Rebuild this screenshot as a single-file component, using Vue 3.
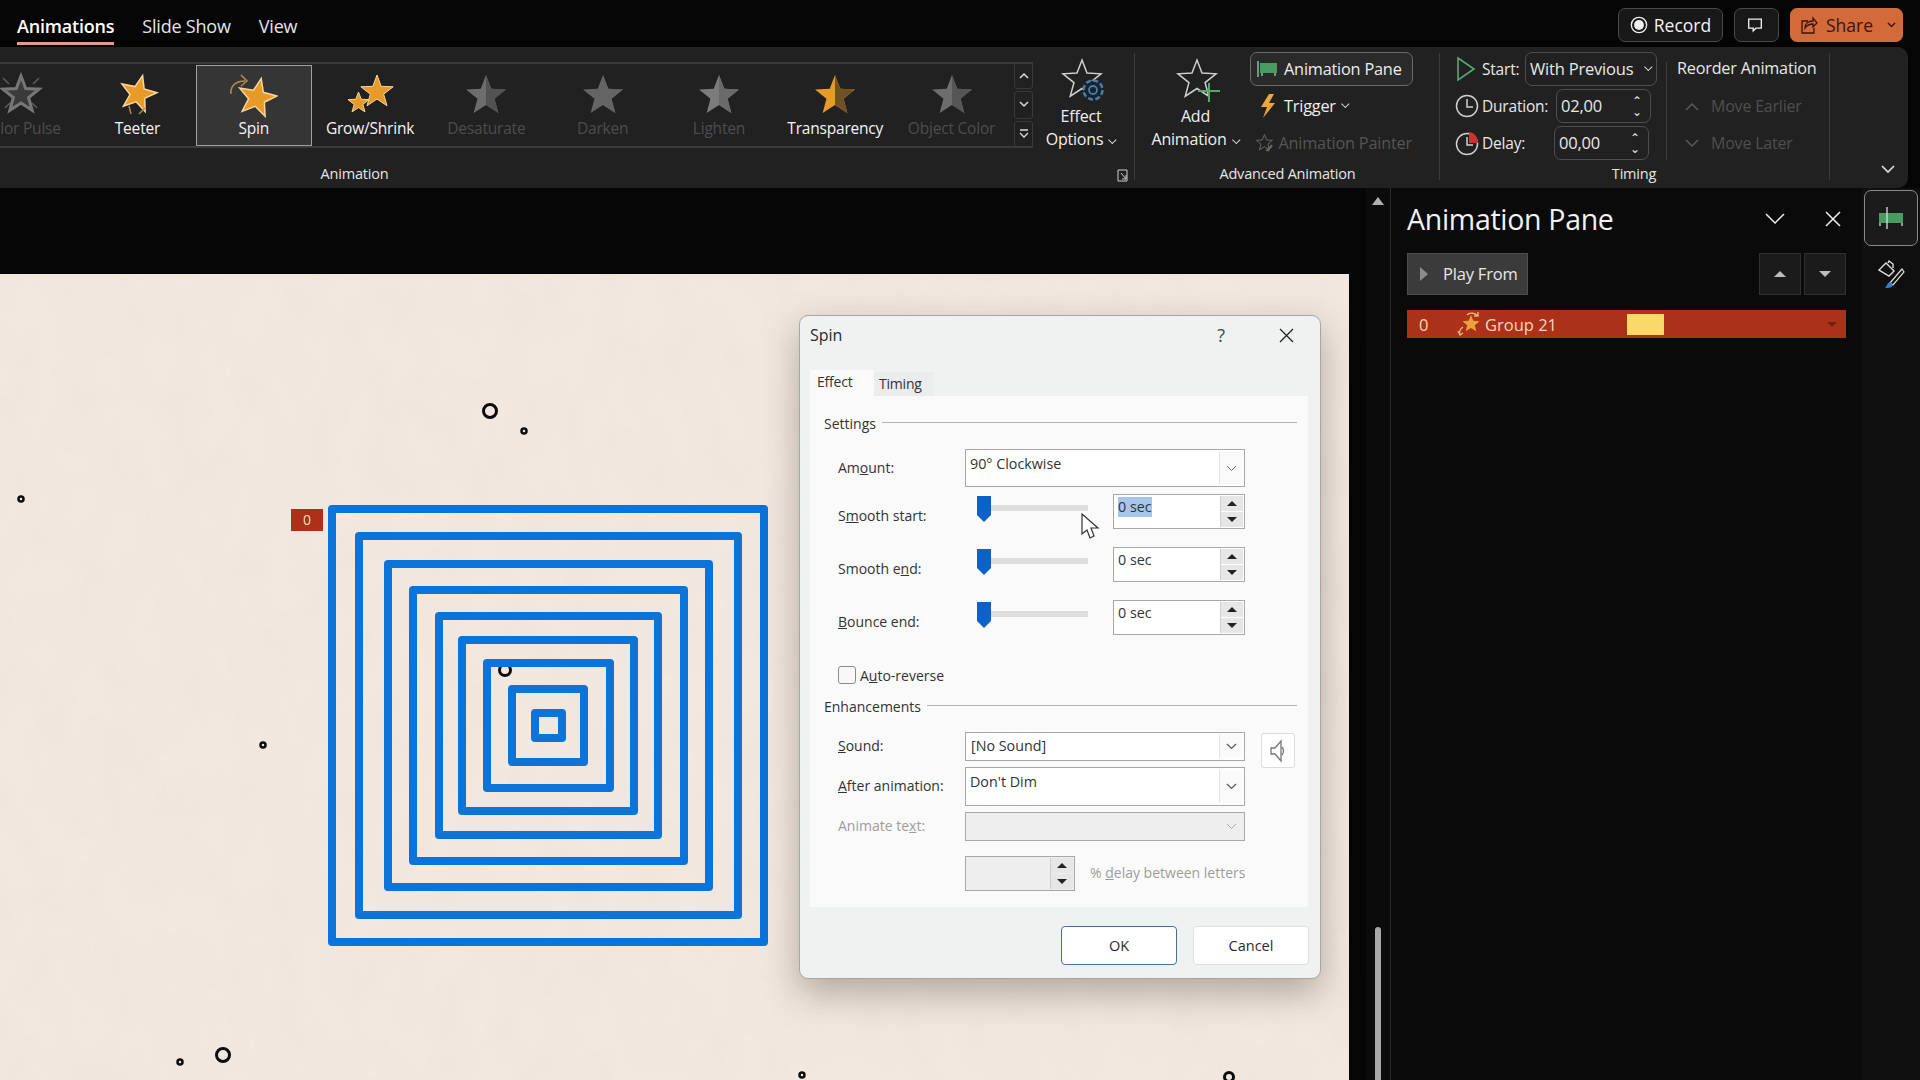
<template>
  <div class="app">
    <header class="topbar">
      <nav class="tabs">
        <span class="tab active">Animations</span>
        <span class="tab">Slide Show</span>
        <span class="tab">View</span>
      </nav>
      <div class="top-actions">
        <button class="top-btn record">
          <svg width="18" height="18" viewBox="0 0 20 20"><circle cx="10" cy="10" r="8.500" fill="none" stroke="#eee" stroke-width="1.500"/><circle cx="10" cy="10" r="5.500" fill="#eee"/></svg>
          Record
        </button>
        <button class="top-btn comment">
          <svg width="18" height="20" viewBox="0 0 20 20"><path d="M3 3.500h14v10h-6l-3 3v-3H3z" fill="none" stroke="#eee" stroke-width="1.500"/></svg>
        </button>
        <button class="top-btn share">
          <svg width="17" height="20" viewBox="0 0 17 20"><path d="M7 6H1v12h12v-5M4 13c0-4 3-7 8-7V3l4 5-4 4V9c-4 0-6 1-8 4z" fill="none" stroke="#3d1408" stroke-width="1.300"/></svg>
          Share
          <svg class="share-caret" width="9" height="6" viewBox="0 0 9 6"><path d="M1 1l3.500 3.500L8 1" fill="none" stroke="#3d1408" stroke-width="1.500"/></svg>
        </button>
      </div>
    </header>

    <section class="ribbon">
      <div class="group group-animation">
        <div class="gallery-row">
          <div class="gallery">
            <div class="gallery-items">
              <div
                  v-for="item in effects"
                  :key="item.name"
                  class="effect"
                  :class="{ selected: item.name === 'Spin', disabled: item.disabled }"
              >
                <svg width="48" height="48" viewBox="0 0 48 48">
                  <template v-if="item.icon === 'pulse'">
                    <path d="M6 6l6 6M42 6l-6 6M8 36l5-5M40 36l-5-5" stroke="#5c5c5c" stroke-width="1.500"/>
                    <polygon :points="star(24, 23, 19, 8)" fill="#3a3a3a" stroke="#777" stroke-width="3"/>
                  </template>
                  <template v-else-if="item.icon === 'teeter'">
                    <polygon :points="star(25, 22, 19, 8, 14)" fill="#e89a28" stroke="#f5d79c" stroke-width="1.500"/>
                    <path d="M16 34l2 8M32 36l-6 6" stroke="#a98552" stroke-width="1.500"/>
                  </template>
                  <template v-else-if="item.icon === 'spin'">
                    <polygon :points="star(27, 26, 20, 8.500, 12)" fill="#e89a28" stroke="#f5d79c" stroke-width="1.500"/>
                    <path d="M1 22c-1-9 6-13 14-13M11 3l6 6-6 5" fill="none" stroke="#b08a52" stroke-width="1.500"/>
                  </template>
                  <template v-else-if="item.icon === 'grow'">
                    <polygon :points="star(31, 20, 17, 7)" fill="#e89a28" stroke="#f5d79c" stroke-width="1"/>
                    <polygon :points="star(12.500, 31, 11, 4.600)" fill="#e89a28" stroke="#f5d79c" stroke-width="1"/>
                  </template>
                  <template v-else-if="item.icon === 'transparency'">
                    <polygon :points="star(24, 24, 21, 9)" fill="#e89a28"/>
                    <polygon :points="halfStar(24, 24, 21, 9)" fill="#6e5128"/>
                  </template>
                  <template v-else>
                    <polygon :points="star(24, 24, 21, 9)" :fill="item.tone"/>
                    <polygon :points="halfStar(24, 24, 21, 9)" :fill="item.shade"/>
                  </template>
                </svg>
                <span class="effect-name">{{ item.name }}</span>
              </div>
            </div>
            <div class="gallery-scroll">
              <button class="scroll-btn"><svg width="10" height="7" viewBox="0 0 10 7"><path d="M1 6l4-4 4 4" fill="none" stroke="#ddd" stroke-width="1.500"/></svg></button>
              <button class="scroll-btn"><svg width="10" height="7" viewBox="0 0 10 7"><path d="M1 1l4 4 4-4" fill="none" stroke="#ddd" stroke-width="1.500"/></svg></button>
              <button class="scroll-btn"><svg width="10" height="10" viewBox="0 0 10 10"><path d="M1 1h8M1 4l4 4 4-4" fill="none" stroke="#ddd" stroke-width="1.300"/></svg></button>
            </div>
          </div>
          <button class="big-btn effect-options">
            <svg class="big-icon" width="48" height="47" viewBox="0 0 48 47">
              <polygon :points="star(25, 22, 20, 8.500)" fill="none" stroke="#cfcfcf" stroke-width="1.500"/>
              <circle cx="36" cy="32" r="9.500" fill="#212121" stroke="#3f7fb8" stroke-width="2.500" stroke-dasharray="5 2.450"/>
              <circle cx="36" cy="32" r="4" fill="none" stroke="#3f7fb8" stroke-width="1.800"/>
            </svg>
            <span class="big-label">Effect</span>
            <span class="big-label">Options <i class="caret"></i></span>
          </button>
        </div>
        <div class="group-label animation-label">Animation</div>
        <svg class="launcher" width="11" height="13" viewBox="0 0 11 13"><path d="M1 1h9v11H1zM4 4l5 6M9 6v4H5" fill="none" stroke="#cfcfcf" stroke-width="1"/></svg>
      </div>

      <div class="group group-advanced">
        <div class="advanced-body">
          <button class="big-btn add-animation">
            <svg class="big-icon" width="48" height="47" viewBox="0 0 48 47">
              <polygon :points="star(25, 22, 20, 8.500)" fill="none" stroke="#cfcfcf" stroke-width="1.500"/>
              <path d="M37 25v19M26 33h22" stroke="#57a86a" stroke-width="2"/>
            </svg>
            <span class="big-label">Add</span>
            <span class="big-label">Animation <i class="caret"></i></span>
          </button>
          <div class="small-col">
            <button class="small-btn pane-btn">
              <svg width="24" height="20" viewBox="0 0 24 20"><rect x="4" y="4" width="17" height="10" fill="#4a9a62"/><path d="M2 2v16M6 14v3M19 14v3" stroke="#9ed3aa" stroke-width="1.300"/></svg>
              Animation Pane
            </button>
            <button class="small-btn">
              <svg width="24" height="26" viewBox="0 0 24 26"><path d="M13 1L5 14h6l-4 11 12-15h-6l5-9z" fill="#e8a93a"/></svg>
              Trigger <i class="caret"></i>
            </button>
            <button class="small-btn off">
              <svg width="24" height="24" viewBox="0 0 24 24"><polygon :points="star(11, 12, 11, 4.800)" fill="none" stroke="#666" stroke-width="1.300"/><path d="M12 22l8-8 2 2-6 7z" fill="#666"/></svg>
              Animation Painter
            </button>
          </div>
        </div>
        <div class="group-label">Advanced Animation</div>
      </div>

      <div class="group group-timing">
        <div class="timing-body">
          <div class="timing-col">
            <div class="timing-row">
              <svg class="timing-icon" width="24" height="32" viewBox="0 0 24 32"><path d="M3 5l16 11L3 27z" fill="none" stroke="#5aa872" stroke-width="1.600"/></svg>
              <span class="timing-label start-label">Start:</span>
              <div class="field start-field">With Previous <i class="caret"></i></div>
            </div>
            <div class="timing-row">
              <svg class="timing-icon" width="24" height="26" viewBox="0 0 24 26"><circle cx="12" cy="13" r="10.500" fill="none" stroke="#cfcfcf" stroke-width="1.500"/><path d="M12 6v8h6" fill="none" stroke="#cfcfcf" stroke-width="1.500"/></svg>
              <span class="timing-label duration-label">Duration:</span>
              <div class="field number-field">02,00<span class="steps"><i>⌃</i><i>⌄</i></span></div>
            </div>
            <div class="timing-row">
              <svg class="timing-icon" width="24" height="26" viewBox="0 0 24 26"><circle cx="12" cy="14" r="10.500" fill="none" stroke="#cfcfcf" stroke-width="1.500"/><path d="M12 7v8h6" fill="none" stroke="#cfcfcf" stroke-width="1.500"/><path d="M13 2a10 10 0 0 1 10 11h-9V3z" fill="#cf2f2f"/></svg>
              <span class="timing-label delay-label">Delay:</span>
              <div class="field number-field">00,00<span class="steps"><i>⌃</i><i>⌄</i></span></div>
            </div>
          </div>
          <div class="reorder-col">
            <div class="reorder-title">Reorder Animation</div>
            <div class="reorder-item">
              <svg width="14" height="9" viewBox="0 0 14 9"><path d="M1 8l6-6 6 6" fill="none" stroke="#5a5a5a" stroke-width="1.500"/></svg>
              Move Earlier
            </div>
            <div class="reorder-item">
              <svg width="14" height="9" viewBox="0 0 14 9"><path d="M1 1l6 6 6-6" fill="none" stroke="#5a5a5a" stroke-width="1.500"/></svg>
              Move Later
            </div>
          </div>
        </div>
        <div class="group-label timing-label-bottom">Timing</div>
      </div>

      <div class="group group-collapse">
        <svg width="14" height="9" viewBox="0 0 14 9"><path d="M1 1l6 6 6-6" fill="none" stroke="#ddd" stroke-width="1.700"/></svg>
      </div>
    </section>

    <main class="workspace">
      <div class="slide-area">
        <div class="slide">
          <svg class="slide-art" width="1349" height="806" viewBox="0 274 1349 806">
            <defs>
              <filter id="paper" x="0" y="0" width="100%" height="100%">
                <feTurbulence type="fractalNoise" baseFrequency="0.03 0.018" numOctaves="3" seed="7"/>
                <feColorMatrix values="0 0 0 0 0.6  0 0 0 0 0.5  0 0 0 0 0.42  0.1 0 0 0 -0.03"/>
              </filter>
            </defs>
            <rect x="0" y="274" width="1349" height="806" fill="#f2e8df"/>
            <rect x="0" y="274" width="1349" height="806" filter="url(#paper)"/>
            <circle
                v-for="dot in dots"
                :key="dot.x + '-' + dot.y"
                :cx="dot.x"
                :cy="dot.y"
                :r="dot.r"
                fill="none"
                stroke="#0c0c0c"
                :stroke-width="dot.w"
            />
            <rect
                v-for="sq in squares"
                :key="sq[0]"
                :x="sq[0] + 4"
                :y="sq[1] + 4"
                :width="sq[2] - sq[0] - 8"
                :height="sq[3] - sq[1] - 8"
                fill="none"
                stroke="#0a74da"
                stroke-width="8"
                stroke-linejoin="round"
            />
          </svg>
          <span class="anim-tag">0</span>

          <div class="dialog">
            <div class="dialog-title">
              <span>Spin</span>
              <span class="help">?</span>
              <svg class="close" width="15" height="15" viewBox="0 0 15 15"><path d="M1 1l13 13M14 1L1 14" stroke="#222" stroke-width="1.300"/></svg>
            </div>
            <div class="dialog-tabs">
              <span class="dtab on">Effect</span>
              <span class="dtab">Timing</span>
            </div>
            <div class="panel">
              <div class="section-head"><span>Settings</span><i></i></div>
              <div class="form-row amount-row">
                <label><span>Am<u>o</u>unt:</span></label>
                <div class="combo tall">90° Clockwise<span class="combo-btn"><svg width="11" height="7" viewBox="0 0 11 7"><path d="M1 1l4.500 4.500L10 1" fill="none" stroke="#666" stroke-width="1"/></svg></span></div>
              </div>
              <div v-for="row in sliders" :key="row.key" class="form-row slider-row" :class="row.key">
                <label class="low"><span v-html="row.label"></span></label>
                <div class="slider-cell">
                  <div class="slider">
                    <svg width="14" height="27" viewBox="0 0 14 27"><path d="M0 1h14v19l-7 7-7-7z" fill="#0b62c8"/></svg>
                    <i class="track"></i>
                  </div>
                  <div class="spin-input">
                    <span :class="{ picked: row.key === 'start' }">0 sec</span>
                    <span class="spin-btns">
                      <b><i class="tri up"></i></b>
                      <b><i class="tri down"></i></b>
                    </span>
                  </div>
                </div>
              </div>
              <div class="auto-row">
                <i class="check"></i>
                <span>A<u>u</u>to-reverse</span>
              </div>
              <div class="section-head enh-head"><span>Enhancements</span><i></i></div>
              <div class="enh-grid">
                <label class="sound-label"><span><u>S</u>ound:</span></label>
                <div class="combo mid">[No Sound]<span class="combo-btn"><svg width="11" height="7" viewBox="0 0 11 7"><path d="M1 1l4.500 4.500L10 1" fill="none" stroke="#555" stroke-width="1.200"/></svg></span></div>
                <button class="speaker">
                  <svg width="16" height="24" viewBox="0 0 16 24"><path d="M1 9h4l6-7v20l-6-7H1zM12 8c2 2 2 6 0 8" fill="none" stroke="#777" stroke-width="1.300"/></svg>
                </button>
                <label class="lift"><span><u>A</u>fter animation:</span></label>
                <div class="combo tall after">Don't Dim<span class="combo-btn"><svg width="11" height="7" viewBox="0 0 11 7"><path d="M1 1l4.500 4.500L10 1" fill="none" stroke="#555" stroke-width="1.200"/></svg></span></div>
                <label class="muted lift"><span>Animate te<u>x</u>t:</span></label>
                <div class="combo mid off"><span class="combo-btn"><svg width="11" height="7" viewBox="0 0 11 7"><path d="M1 1l4.500 4.500L10 1" fill="none" stroke="#aaa" stroke-width="1"/></svg></span></div>
              </div>
              <div class="delay-row">
                <div class="spin-input off">
                  <span></span>
                  <span class="spin-btns">
                    <b><i class="tri up"></i></b>
                    <b><i class="tri down"></i></b>
                  </span>
                </div>
                <span class="muted delay-text">% <u>d</u>elay between letters</span>
              </div>
            </div>
            <div class="dialog-foot">
              <button class="dlg-btn default">OK</button>
              <button class="dlg-btn">Cancel</button>
            </div>
            <svg class="cursor" width="20" height="27" viewBox="0 0 20 27"><path d="M1 1v20l5-4 3 8 4-2-3-8h7z" fill="#fff" stroke="#333" stroke-width="1.200"/></svg>
          </div>
        </div>
      </div>

      <div class="v-scroll">
        <i class="v-arrow"></i>
        <i class="v-thumb"></i>
      </div>

      <aside class="pane">
        <div class="pane-head">
          <h2>Animation Pane</h2>
          <svg width="20" height="12" viewBox="0 0 20 12"><path d="M1 1l9 9 9-9" fill="none" stroke="#eee" stroke-width="1.500"/></svg>
          <svg class="pane-close" width="16" height="16" viewBox="0 0 16 16"><path d="M1 1l14 14M15 1L1 15" stroke="#eee" stroke-width="1.500"/></svg>
        </div>
        <div class="pane-tools">
          <button class="play-from"><i class="play-tri"></i>Play From</button>
          <span class="tools-gap"></span>
          <button class="move-btn"><i class="tri up light"></i></button>
          <button class="move-btn"><i class="tri down light"></i></button>
        </div>
        <div class="anim-row">
          <span class="anim-num">0</span>
          <svg width="26" height="26" viewBox="0 0 26 26">
            <polygon :points="star(14, 13, 9, 4)" fill="#e8a23a"/>
            <path d="M10 4c3-3 8-2 11 1M21 1v4h-4M3 24c-1-3 0-6 3-8M1 20l2 4 3-2" fill="none" stroke="#f0b87a" stroke-width="1.300"/>
          </svg>
          <span class="anim-name">Group 21</span>
          <i class="swatch"></i>
          <i class="tri down row-caret"></i>
        </div>
      </aside>

      <div class="rail">
        <button class="rail-btn on">
          <svg width="26" height="22" viewBox="0 0 26 22"><rect x="1" y="6" width="24" height="10" fill="#4a9a62"/><path d="M9 0v22M2 16v3M24 16v3" stroke="#cfe6d4" stroke-width="1.300"/></svg>
        </button>
        <button class="rail-btn">
          <svg width="28" height="30" viewBox="0 0 28 30"><path d="M2 10l7-7 8 8-5 5zM11 3l1-2 4 3v4" fill="none" stroke="#ddd" stroke-width="1.400"/><path d="M25 9L13 23l3 2 11-13z" fill="none" stroke="#ddd" stroke-width="1.200"/><path d="M13 22c-3 1-3 4-5 6 3 0 7 0 8-3z" fill="#2f7fcf"/></svg>
        </button>
      </div>
    </main>
  </div>
</template>

<script setup>
// 五角星顶点
const starVertices = (cx, cy, outer, inner = outer * 0.42, rot = 0) => {
  const pts = []
  for (let i = 0; i < 10; i++) {
    const r = i % 2 === 0 ? outer : inner
    const a = ((i * 36 + rot - 90) * Math.PI) / 180
    pts.push(`${(cx + r * Math.cos(a)).toFixed(2)},${(cy + r * Math.sin(a)).toFixed(2)}`)
  }
  return pts
}

const star = (cx, cy, outer, inner, rot) => starVertices(cx, cy, outer, inner, rot).join(' ')
const halfStar = (cx, cy, outer, inner) => starVertices(cx, cy, outer, inner).slice(0, 6).join(' ')

const effects = [
  { name: 'Color Pulse', icon: 'pulse', disabled: true },
  { name: 'Teeter', icon: 'teeter' },
  { name: 'Spin', icon: 'spin' },
  { name: 'Grow/Shrink', icon: 'grow' },
  { name: 'Desaturate', icon: 'plain', tone: '#6d6d6d', shade: '#525252', disabled: true },
  { name: 'Darken', icon: 'plain', tone: '#646464', shade: '#646464', disabled: true },
  { name: 'Lighten', icon: 'plain', tone: '#7c7c7c', shade: '#6a6a6a', disabled: true },
  { name: 'Transparency', icon: 'transparency' },
  { name: 'Object Color', icon: 'plain', tone: '#6d6d6d', shade: '#565656', disabled: true }
]

const sliders = [
  { key: 'start', label: 'S<u>m</u>ooth start:' },
  { key: 'end', label: 'Smooth e<u>n</u>d:' },
  { key: 'bounce', label: '<u>B</u>ounce end:' }
]

const squares = [
  [328, 505, 768, 946],
  [355, 532, 742, 919],
  [384, 560, 713, 891],
  [409, 586, 688, 865],
  [435, 612, 662, 839],
  [458, 636, 638, 815],
  [483, 659, 614, 792],
  [508, 685, 588, 766],
  [531, 709, 566, 742]
]

const dots = [
  { x: 490, y: 411, r: 6.5, w: 3 },
  { x: 524, y: 431, r: 2.5, w: 2.5 },
  { x: 21, y: 499, r: 2.5, w: 2.5 },
  { x: 263, y: 745, r: 2.5, w: 2.5 },
  { x: 180, y: 1062, r: 2.5, w: 2.5 },
  { x: 223, y: 1055, r: 6.5, w: 3 },
  { x: 802, y: 1075, r: 2.5, w: 2.5 },
  { x: 1229, y: 1077, r: 4.5, w: 3 },
  { x: 505, y: 670, r: 5.5, w: 3 }
]
</script>

<style scoped>
.app {
  width: 1920px;
  height: 1080px;
  display: flex;
  flex-direction: column;
  overflow: hidden;
  background: #050505;
  color: #e8e8e8;
  font-family: "Open Sans", "Noto Sans", sans-serif;
  font-size: 15px;
}

button {
  font-family: inherit;
  color: inherit;
  background: none;
  border: none;
  padding: 0;
}

i {
  font-style: normal;
  display: block;
}

/* top bar */
.topbar {
  height: 47px;
  flex-shrink: 0;
  display: flex;
  align-items: center;
  justify-content: space-between;
}

.tabs {
  display: flex;
  gap: 28px;
  padding-left: 17px;
  padding-top: 2px;
}

.tab {
  position: relative;
  font-size: 18px;
  letter-spacing: -0.2px;
  color: #e4e4e4;
  line-height: 28px;
  margin-top: 7px;
  padding-bottom: 5px;
}

.tab.active {
  color: #fff;
  font-weight: 600;
  border-bottom: 3px solid #d9a18a;
  padding-bottom: 2px;
}

.top-actions {
  display: flex;
  gap: 11px;
  padding-right: 17px;
  padding-top: 3px;
  align-items: center;
}

.top-btn {
  height: 34px;
  display: flex;
  align-items: center;
  justify-content: center;
  gap: 6px;
  font-size: 17.500px;
  border: 1px solid #4a4a4a;
  border-radius: 7px;
  background: #181818;
  color: #f2f2f2;
}

.record { width: 105px; }

.comment {
  width: 45px;
  padding-right: 4px;
  box-sizing: border-box;
}

.share {
  width: 113px;
  justify-content: flex-start;
  padding-left: 10px;
  gap: 8px;
  box-sizing: border-box;
  background: #d26a3a;
  border-color: #d26a3a;
  color: #3d1408;
}

.share-caret {
  margin-left: 6px;
}

/* ribbon */
.ribbon {
  position: relative;
  height: 141px;
  width: 1908px;
  flex-shrink: 0;
  display: flex;
  background: #212121;
  border-radius: 0 10px 10px 0;
}

.group {
  position: relative;
  display: flex;
  flex-direction: column;
}

.group::after {
  content: "";
  position: absolute;
  right: 0;
  top: 6px;
  bottom: 8px;
  width: 1px;
  background: #3b3b3b;
}

.group-label {
  margin-top: auto;
  height: 25px;
  line-height: 22px;
  font-size: 14.500px;
  text-align: center;
  letter-spacing: -0.2px;
  color: #e6e6e6;
}

.group-animation {
  width: 1135px;
}

.gallery-row {
  display: flex;
  align-items: flex-start;
  padding-top: 15px;
}

.gallery {
  display: flex;
  width: 1033px;
  height: 86px;
  border-top: 2px solid #3a3a3a;
  border-bottom: 2px solid #3a3a3a;
  box-sizing: border-box;
}

.gallery-items {
  flex: 1;
  display: flex;
  overflow: hidden;
  min-width: 0;
  padding-top: 1px;
}

.effect {
  flex: 0 0 116.300px;
  height: 81px;
  box-sizing: border-box;
  display: flex;
  flex-direction: column;
  align-items: center;
  padding-top: 6px;
  border: 1px solid transparent;
}

.effect:first-child {
  margin-left: -37px;
}

.effect.selected {
  background: #353535;
  border: 1px solid #a0a0a0;
}

.effect-name {
  font-size: 15.500px;
  letter-spacing: -0.2px;
  line-height: 20px;
  color: #f4f4f4;
  white-space: nowrap;
  margin-top: -2px;
}

.effect.disabled .effect-name {
  color: #4d4d4d;
}

.gallery-scroll {
  width: 19px;
  flex-shrink: 0;
  display: flex;
  flex-direction: column;
  gap: 2px;
  margin-top: -2px;
  margin-bottom: -2px;
}

.scroll-btn {
  flex: 1;
  display: flex;
  align-items: center;
  justify-content: center;
  border: 1px solid #3a3a3a;
  border-radius: 3px;
}

.big-btn {
  display: flex;
  flex-direction: column;
  align-items: center;
}

.big-icon {
  overflow: visible;
}

.big-label {
  font-size: 16px;
  line-height: 23px;
  letter-spacing: -0.2px;
  white-space: nowrap;
  color: #efefef;
}

.effect-options {
  width: 96px;
  margin-top: -4px;
}

.caret {
  display: inline-block;
  width: 5px;
  height: 5px;
  border-right: 1.500px solid #ddd;
  border-bottom: 1.500px solid #ddd;
  transform: rotate(45deg) translate(-2px, -1px);
  margin-left: 3px;
}

.animation-label {
  padding-right: 426px;
}

.launcher {
  position: absolute;
  left: 1117px;
  top: 122px;
}

.group-advanced {
  width: 305px;
}

.advanced-body {
  display: flex;
  padding-top: 5px;
}

.add-animation {
  width: 115px;
  flex-shrink: 0;
  margin-top: 6px;
  padding-left: 6px;
  box-sizing: border-box;
}

.small-col {
  display: flex;
  flex-direction: column;
  gap: 3px;
}

.small-btn {
  height: 34px;
  width: 163px;
  box-sizing: border-box;
  display: flex;
  align-items: center;
  gap: 4px;
  padding-left: 5px;
  font-size: 16.300px;
  letter-spacing: -0.2px;
  color: #eee;
  white-space: nowrap;
  border: 1px solid transparent;
  border-radius: 7px;
}

.small-btn.pane-btn {
  border-color: #6a6a6a;
  background: #2a2a2a;
}

.small-btn.off {
  color: #555;
}

.group-timing {
  width: 390px;
}

.timing-body {
  display: flex;
  padding-top: 5px;
}

.timing-col {
  width: 226px;
  flex-shrink: 0;
  display: flex;
  flex-direction: column;
  gap: 3px;
  padding-left: 15px;
  box-sizing: border-box;
}

.timing-row {
  height: 34px;
  display: flex;
  align-items: center;
  font-size: 15.500px;
  letter-spacing: -0.2px;
  white-space: nowrap;
}

.timing-icon {
  flex-shrink: 0;
  margin-right: 3px;
}

.start-label { width: 43px; }
.duration-label { width: 74px; }
.delay-label { width: 72px; }

.field {
  height: 34px;
  box-sizing: border-box;
  display: flex;
  align-items: center;
  padding: 0 4px 1px;
  font-size: 16.500px;
  border: 1px solid #4e4e4e;
  border-radius: 7px;
}

.start-field {
  width: 132px;
  justify-content: space-between;
}

.number-field {
  width: 95px;
  justify-content: space-between;
}

.steps {
  display: flex;
  flex-direction: column;
  align-items: center;
  line-height: 11px;
  font-size: 12px;
  margin-right: 4px;
}

.reorder-col {
  flex: 1;
  display: flex;
  flex-direction: column;
  gap: 3px;
  padding-left: 10px;
  border-left: 1px solid #3b3b3b;
  margin-top: 10px;
}

.reorder-title {
  height: 34px;
  line-height: 24px;
  margin-top: -10px;
  padding-top: 4px;
  box-sizing: border-box;
  font-size: 16.200px;
  letter-spacing: -0.2px;
}

.reorder-item {
  height: 34px;
  display: flex;
  align-items: center;
  gap: 12px;
  padding-left: 8px;
  font-size: 16px;
  letter-spacing: -0.2px;
  color: #4f4f4f;
}

.timing-label-bottom {
  padding-right: 2px;
}

.group-collapse {
  flex: 1;
  align-items: center;
  justify-content: flex-end;
  padding-bottom: 14px;
  padding-left: 38px;
  box-sizing: border-box;
  width: 78px;
}

.group-collapse::after {
  display: none;
}

/* workspace */
.workspace {
  flex: 1;
  display: flex;
  min-height: 0;
  background: #060606;
}

.slide-area {
  width: 1366px;
  flex-shrink: 0;
  padding-top: 86px;
  box-sizing: border-box;
}

.slide {
  position: relative;
  width: 1349px;
  height: 806px;
}

.slide-art {
  display: block;
}

.anim-tag {
  position: absolute;
  left: 291px;
  top: 235px;
  width: 32px;
  height: 22px;
  line-height: 22px;
  text-align: center;
  font-size: 14px;
  background: #ad3119;
  color: #f7dcc4;
}

/* dialog */
.dialog {
  position: absolute;
  left: 799px;
  top: 41px;
  width: 522px;
  height: 664px;
  box-sizing: border-box;
  border: 1px solid #a9a5a0;
  border-radius: 9px;
  background: #f0f1f1;
  color: #2b2b2b;
  font-size: 14px;
  box-shadow: 0 14px 36px rgba(60, 45, 35, 0.35);
}

.dialog-title {
  height: 54px;
  display: flex;
  align-items: center;
  padding: 0 26px 16px 10px;
  box-sizing: border-box;
  font-size: 16px;
}

.help {
  margin-left: auto;
  margin-right: 54px;
  font-size: 18px;
  color: #444;
}

.dialog-tabs {
  height: 26px;
  display: flex;
  align-items: flex-end;
  padding-left: 10px;
}

.dtab {
  width: 59px;
  height: 24px;
  line-height: 24px;
  padding-left: 5px;
  box-sizing: border-box;
  font-size: 14px;
  letter-spacing: -0.2px;
  background: #ebecec;
  color: #333;
}

.dtab.on {
  width: 64px;
  height: 26px;
  line-height: 24px;
  padding-left: 7px;
  background: #fafafa;
}

.panel {
  margin: 0 12px 0 10px;
  height: 511px;
  padding: 17px 11px 0 14px;
  box-sizing: border-box;
  background: #fafafa;
}

.section-head {
  height: 20px;
  display: flex;
  align-items: center;
  gap: 6px;
  font-size: 14px;
  color: #333;
}

.section-head i {
  flex: 1;
  height: 1px;
  margin-top: -1px;
  background: #b4b4b4;
}

.form-row {
  display: grid;
  grid-template-columns: 127px 280px;
  padding-left: 14px;
}

label {
  display: flex;
  align-items: center;
  color: #333;
  font-size: 14px;
}

label.low {
  padding-top: 7px;
}

label.lift {
  padding-bottom: 2px;
}

.amount-row {
  margin-top: 16px;
}

.amount-row label {
  padding-bottom: 2px;
}

.combo {
  position: relative;
  box-sizing: border-box;
  padding: 4px 0 0 4px;
  background: #fff;
  border: 1px solid #a8a8a8;
  font-size: 14.300px;
  color: #333;
}

.combo.tall { height: 38px; }
.combo.after { height: 39px; }

.combo.mid {
  height: 29px;
  padding-top: 3px;
  padding-left: 5px;
}

.combo.off {
  background: #eeeeee;
}

.combo-btn {
  position: absolute;
  right: 2px;
  top: 2px;
  bottom: 2px;
  width: 22px;
  display: flex;
  align-items: center;
  justify-content: center;
  border-left: 1px solid #e2e2e2;
  background: #fafafa;
}

.combo.off .combo-btn {
  background: #eeeeee;
  border-left-color: #eeeeee;
}

.slider-row { margin-top: 18px; }
.slider-row.start { margin-top: 7px; }

.slider-cell {
  display: flex;
  height: 35px;
}

.slider {
  position: relative;
  width: 148px;
  padding-left: 12px;
  margin-top: 1px;
  box-sizing: border-box;
  display: flex;
}

.track {
  width: 97px;
  height: 6px;
  margin-top: 10px;
  background: #dedede;
}

.spin-input {
  position: relative;
  width: 132px;
  height: 35px;
  box-sizing: border-box;
  padding: 2px 0 0 4px;
  background: #fff;
  border: 1px solid #a8a8a8;
  font-size: 14.300px;
  line-height: 20px;
  color: #333;
}

.picked {
  background: #a5c6ea;
  display: inline-block;
}

.spin-btns {
  position: absolute;
  right: 1px;
  top: 1px;
  bottom: 1px;
  width: 22px;
  display: flex;
  flex-direction: column;
  gap: 1px;
  border-left: 1px solid #cfcfcf;
}

.spin-btns b {
  flex: 1;
  display: flex;
  align-items: center;
  justify-content: center;
  background: #e6e6e6;
}

.tri {
  width: 0;
  height: 0;
  border-left: 5px solid transparent;
  border-right: 5px solid transparent;
}

.tri.up { border-bottom: 5px solid #222; }
.tri.down { border-top: 5px solid #222; }
.tri.up.light { border-bottom-color: #bdbdbd; border-left-width: 6px; border-right-width: 6px; border-bottom-width: 6px; }
.tri.down.light { border-top-color: #bdbdbd; border-left-width: 6px; border-right-width: 6px; border-top-width: 6px; }

.auto-row {
  margin-top: 31px;
  padding-left: 14px;
  display: flex;
  align-items: center;
  gap: 4px;
  height: 18px;
  font-size: 14px;
  color: #333;
}

.check {
  width: 16px;
  height: 16px;
  border: 1px solid #8a8a8a;
  border-radius: 3px;
  background: #f8f8f8;
}

.enh-head {
  margin-top: 12px;
}

.enh-grid {
  margin-top: 16px;
  padding-left: 14px;
  display: grid;
  grid-template-columns: 127px 280px auto;
  grid-template-rows: 29px 39px 29px;
  row-gap: 6px;
}

.speaker {
  grid-column: 3;
  grid-row: 1 / span 2;
  width: 34px;
  height: 35px;
  margin: 1px 0 0 16px;
  display: flex;
  align-items: center;
  justify-content: center;
  background: #fff;
  border: 1px solid #dcdcdc;
  border-radius: 3px;
}

.sound-label {
  align-items: flex-start;
  padding-top: 4px;
}

.muted {
  color: #9d9d9d;
}

.delay-row {
  margin-top: 15px;
  padding-left: 141px;
  display: flex;
  align-items: center;
  gap: 15px;
  font-size: 14px;
}

.delay-text {
  padding-bottom: 2px;
}

.spin-input.off {
  width: 110px;
  background: #eeeeee;
  border-color: #a8a8a8;
}

.dialog-foot {
  display: flex;
  justify-content: flex-end;
  gap: 16px;
  padding: 19px 11px 0 0;
}

.dlg-btn {
  width: 116px;
  height: 39px;
  background: #fff;
  border: 1px solid #e0e0e0;
  border-radius: 4px;
  font-size: 14.500px;
  color: #2b2b2b;
}

.dlg-btn.default {
  border: 1px solid #4a6f96;
}

.cursor {
  position: absolute;
  left: 281px;
  top: 197px;
}

/* scroll bar */
.v-scroll {
  width: 24px;
  flex-shrink: 0;
  display: flex;
  flex-direction: column;
  align-items: center;
  justify-content: space-between;
  padding-top: 9px;
  box-sizing: border-box;
  background: #0b0b0b;
}

.v-arrow {
  width: 0;
  height: 0;
  border-left: 6px solid transparent;
  border-right: 6px solid transparent;
  border-bottom: 8px solid #b0b0b0;
}

.v-thumb {
  width: 6px;
  height: 153px;
  background: #a8a8a8;
  border-radius: 3px 3px 0 0;
}

/* animation pane */
.pane {
  width: 472px;
  flex-shrink: 0;
  box-sizing: border-box;
  padding: 0 16px;
  border-left: 1px solid #2b2b2b;
  background: #0a0a0a;
}

.pane-head {
  height: 65px;
  display: flex;
  align-items: center;
  padding-bottom: 4px;
  box-sizing: border-box;
}

.pane-head h2 {
  margin: 0 auto 0 0;
  font-size: 28.500px;
  font-weight: 400;
  letter-spacing: -0.3px;
  color: #f2f2f2;
}

.pane-close {
  margin-left: 40px;
  margin-right: 5px;
}

.pane-tools {
  display: flex;
  gap: 3px;
  height: 42px;
}

.tools-gap {
  flex: 1;
}

.play-from {
  width: 121px;
  display: flex;
  align-items: center;
  padding-bottom: 1px;
  font-size: 16.500px;
  letter-spacing: -0.2px;
  background: #3b3b3b;
  border: 1px solid #4d4d4d;
  box-sizing: border-box;
}

.play-tri {
  width: 0;
  height: 0;
  margin: 0 15px 0 12px;
  border-top: 7px solid transparent;
  border-bottom: 7px solid transparent;
  border-left: 8px solid #8c8c8c;
}

.move-btn {
  width: 42px;
  display: flex;
  align-items: center;
  justify-content: center;
  background: #1b1b1b;
  border: 1px solid #303030;
  box-sizing: border-box;
}

.anim-row {
  margin-top: 15px;
  height: 28px;
  display: flex;
  align-items: center;
  background: #ab3118;
  color: #f6d7bd;
  font-size: 16.500px;
}

.anim-num {
  width: 50px;
  padding-left: 12px;
  box-sizing: border-box;
}

.anim-name {
  width: 142px;
  margin-left: 2px;
}

.swatch {
  width: 37px;
  height: 21px;
  background: #fbd967;
}

.row-caret {
  margin-left: auto;
  margin-right: 9px;
  border-top-color: #6e2413 !important;
}

/* right rail */
.rail {
  flex: 1;
  display: flex;
  flex-direction: column;
  align-items: flex-start;
  gap: 1px;
  padding: 2px 0 0 2px;
  background: #0f0f0f;
}

.rail-btn {
  width: 54px;
  height: 56px;
  display: flex;
  align-items: center;
  justify-content: center;
  border: 1px solid transparent;
  box-sizing: border-box;
  border-radius: 7px;
}

.rail-btn.on {
  background: #1b1b1b;
  border-color: #8a8a8a;
}
</style>

<style>
html, body {
  margin: 0;
  background: #000;
  overflow: hidden;
}
</style>
